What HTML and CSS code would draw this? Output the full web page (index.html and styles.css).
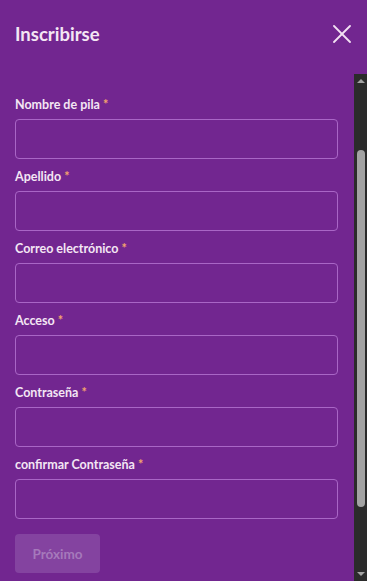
FILE: index.html
```html
<!DOCTYPE html>
<html>
<head>
  <meta charset="UTF-8">
  <title>Inscribirse</title>
  <link rel="stylesheet" href="styles.css">
</head>
<body>
  <div class="header">
    <h1>Inscribirse</h1>
    <button class="close" aria-label="Cerrar">
      <svg width="18" height="18" viewBox="0 0 18 18" fill="none" stroke="#f3e2f3" stroke-width="1.8" stroke-linecap="round">
        <line x1="1" y1="1" x2="17" y2="17"></line>
        <line x1="17" y1="1" x2="1" y2="17"></line>
      </svg>
    </button>
  </div>

  <div class="panel">
    <form class="form">
      <div class="field">
        <label>Nombre de pila <span class="req">*</span></label>
        <input type="text">
      </div>
      <div class="field">
        <label>Apellido <span class="req">*</span></label>
        <input type="text">
      </div>
      <div class="field">
        <label>Correo electrónico <span class="req">*</span></label>
        <input type="text">
      </div>
      <div class="field">
        <label>Acceso <span class="req">*</span></label>
        <input type="text">
      </div>
      <div class="field">
        <label>Contraseña <span class="req">*</span></label>
        <input type="password">
      </div>
      <div class="field">
        <label>confirmar Contraseña <span class="req">*</span></label>
        <input type="password">
      </div>
      <button type="button" class="next" disabled>Próximo</button>
    </form>

    <div class="scrollbar">
      <div class="arrow"><span class="up"></span></div>
      <div class="track">
        <div class="thumb"></div>
      </div>
      <div class="arrow"><span class="down"></span></div>
    </div>
  </div>
</body>
</html>
```

FILE: styles.css
```css
* {
  margin: 0;
  padding: 0;
  box-sizing: border-box;
}

body {
  width: 367px;
  height: 581px;
  overflow: hidden;
  background-color: #722690;
  font-family: Lato, "Liberation Sans", sans-serif;
  color: #f4e6f4;
}

.header {
  height: 74px;
  padding: 24px 15px 0 15px;
  display: flex;
  justify-content: space-between;
  align-items: flex-start;
}

.header h1 {
  font-size: 18.5px;
  font-weight: 700;
  line-height: 20px;
}

.close {
  background: none;
  border: none;
  margin-top: 1px;
  margin-right: 1px;
  cursor: pointer;
}

.close svg {
  display: block;
}

.panel {
  display: flex;
  height: 507px;
}

.form {
  flex: 1;
  padding: 24px 16px 0 15px;
}

.field {
  margin-bottom: 11px;
}

.field label {
  display: block;
  font-size: 12.5px;
  font-weight: 700;
  line-height: 14px;
  margin-bottom: 7px;
}

.req {
  color: #f4a46d;
}

.field input {
  display: block;
  width: 100%;
  height: 40px;
  background: transparent;
  border: 1px solid #a966c6;
  border-radius: 4px;
  color: #fff;
  padding: 0 10px;
  font-family: inherit;
  font-size: 14px;
  outline: none;
}

.next {
  margin-top: 4px;
  width: 85px;
  height: 39px;
  background-color: #8443a0;
  border: none;
  border-radius: 4px;
  color: #a679bb;
  font-family: inherit;
  font-size: 13.5px;
  font-weight: 700;
}

/* fake browser scrollbar */
.scrollbar {
  width: 13px;
  background-color: #2b2b2b;
  display: flex;
  flex-direction: column;
}

.arrow {
  height: 14px;
  display: flex;
  align-items: center;
  justify-content: center;
}

.up {
  border-left: 4px solid transparent;
  border-right: 4px solid transparent;
  border-bottom: 4px solid #a3a3a3;
}

.down {
  border-left: 4px solid transparent;
  border-right: 4px solid transparent;
  border-top: 4px solid #a3a3a3;
}

.track {
  flex: 1;
  padding-top: 62px;
  display: flex;
  justify-content: center;
}

.thumb {
  width: 8px;
  height: 357px;
  background-color: #a3a3a3;
  border-radius: 4px;
}
```
